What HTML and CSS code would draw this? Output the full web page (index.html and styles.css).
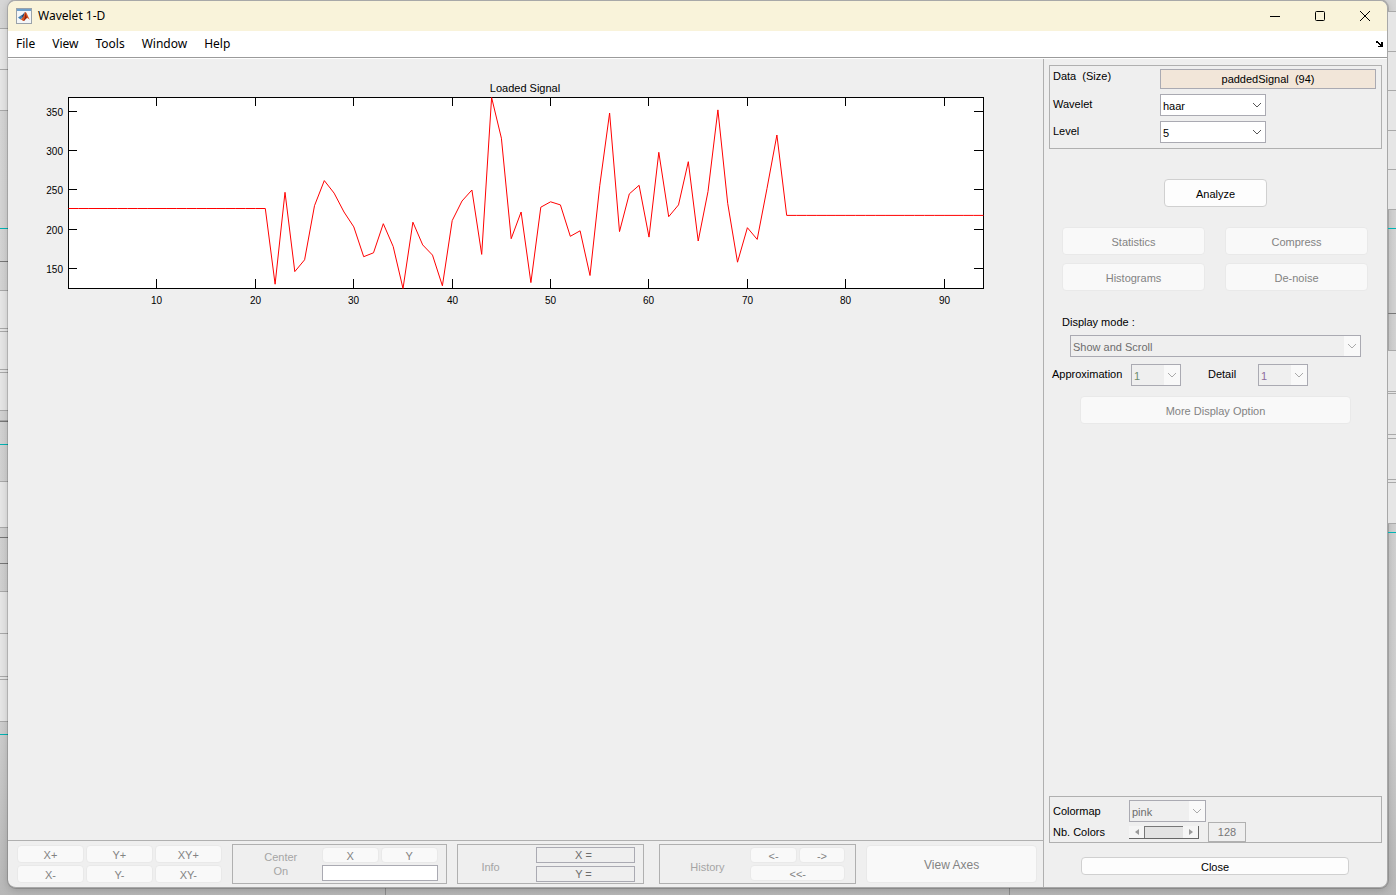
FILE: index.html
```html
<!DOCTYPE html>
<html lang="en">
<head>
    <meta charset="UTF-8">
    <meta name="viewport" content="width=device-width, initial-scale=1.0">
    <title>Wavelet 1-D</title>
    <link rel="stylesheet" href="styles.css">
</head>
<body>
    <svg class="symbols" aria-hidden="true">
        <symbol id="chevron" viewBox="0 0 16 20">
            <path d="M4 8 L8 12 L12 8" fill="none" stroke="currentColor"/>
        </symbol>
    </svg>

    <svg class="desk desk-left" aria-hidden="true">
        <path class="light" d="M4 28V110M4 290V410M4 481V527M4 591V721"/>
        <path class="rule" d="M0 28.5H8M0 69.5H8M0 110.5H8M0 290.5H8M0 328.5H8M0 331.5H8M0 369.5H8M0 372.5H8M0 410.5H8M0 420.5H8M0 481.5H8M0 527.5H8M0 591.5H8M0 633.5H8M0 676.5H8M0 679.5H8M0 721.5H8"/>
        <path class="dark" d="M0 261.5H8M0 421.5H8M0 537.5H8M0 563.5H8"/>
        <path class="teal" d="M0 228.5H8M0 444.5H8M0 734.5H8"/>
    </svg>

    <div class="window">
        <header class="titlebar">
            <svg class="logo" viewBox="0 0 16 16" aria-hidden="true">
                <rect x="0.5" y="0.5" width="15" height="15" fill="#f4f6f8" stroke="#9aa2aa"/>
                <path d="M1 1h14v2H1z" fill="#6ea0cc"/>
                <path d="M2 9.5 L5 7.5 L7 9.5 L4.5 11.5z" fill="#3f7fb5"/>
                <path d="M5 7.5 C7 7 7.5 5 9 4 L7.5 9.5 L6.5 9.5z" fill="#244d7c"/>
                <path d="M9 4 C8 7 7 10.5 4.5 11.5 C6 11.5 6.5 13 7.5 13 C9 13 9.5 10 11 10 C12 10 13 11 14 12 C12 9 11 4 9 4z" fill="#d9541e"/>
                <path d="M9 4 C9.5 7 9 10 7.5 13 C9 13 9.5 10 11 10z" fill="#8f2313"/>
            </svg>
            <h1>Wavelet 1-D</h1>
            <div class="window-buttons">
                <button aria-label="Minimize"><svg viewBox="0 0 12 12"><path d="M1 6.5H11"/></svg></button>
                <button aria-label="Maximize"><svg viewBox="0 0 12 12"><rect x="1.5" y="1.5" width="9" height="9" rx="1"/></svg></button>
                <button aria-label="Close window"><svg viewBox="0 0 12 12"><path d="M1 1L11 11M11 1L1 11"/></svg></button>
            </div>
        </header>

        <nav class="menubar">
            <button>File</button>
            <button>View</button>
            <button>Tools</button>
            <button>Window</button>
            <button>Help</button>
            <button class="dock" aria-label="Dock">
                <svg viewBox="0 0 8 6"><path d="M0 0h2v1h1v1h1v1h1V1h2v5H2V5h2V4H3V3H2V2H0z"/></svg>
            </button>
        </nav>

        <div class="content">
            <main class="workspace">
                <svg class="chart" id="chart" viewBox="0 0 1035 260" role="img" aria-label="Loaded Signal"></svg>

                <footer class="toolbar">
                    <div class="zoom">
                        <button disabled>X+</button>
                        <button disabled>Y+</button>
                        <button disabled>XY+</button>
                        <button disabled>X-</button>
                        <button disabled>Y-</button>
                        <button disabled>XY-</button>
                    </div>
                    <div class="group center">
                        <label for="center-on">Center<br>On</label>
                        <div class="pair">
                            <button disabled>X</button>
                            <button disabled>Y</button>
                            <input type="text" id="center-on">
                        </div>
                    </div>
                    <div class="group info">
                        <span>Info</span>
                        <div class="readouts">
                            <output>X =</output>
                            <output>Y =</output>
                        </div>
                    </div>
                    <div class="group history">
                        <span>History</span>
                        <div class="pair">
                            <button disabled>&lt;-</button>
                            <button disabled>-&gt;</button>
                            <button class="wide" disabled>&lt;&lt;-</button>
                        </div>
                    </div>
                    <button class="view-axes" disabled>View Axes</button>
                </footer>
            </main>

            <aside class="sidebar">
                <section class="panel data">
                    <label for="data-name">Data  (Size)</label>
                    <output class="data-name" id="data-name">paddedSignal  (94)</output>
                    <label for="wavelet">Wavelet</label>
                    <div class="dropdown">
                        <select id="wavelet"><option>haar</option></select>
                        <svg><use href="#chevron"/></svg>
                    </div>
                    <label for="level">Level</label>
                    <div class="dropdown">
                        <select id="level"><option>5</option></select>
                        <svg><use href="#chevron"/></svg>
                    </div>
                </section>

                <button class="analyze">Analyze</button>

                <div class="tools">
                    <button disabled>Statistics</button>
                    <button disabled>Compress</button>
                    <button disabled>Histograms</button>
                    <button disabled>De-noise</button>
                </div>

                <section class="display">
                    <label for="mode">Display mode :</label>
                    <div class="dropdown off mode">
                        <select id="mode" disabled><option>Show and Scroll</option></select>
                        <svg><use href="#chevron"/></svg>
                    </div>
                    <div class="levels">
                        <label for="approximation">Approximation</label>
                        <div class="dropdown off">
                            <select id="approximation" class="green" disabled><option>1</option></select>
                            <svg><use href="#chevron"/></svg>
                        </div>
                        <label class="detail" for="detail">Detail</label>
                        <div class="dropdown off">
                            <select id="detail" class="purple" disabled><option>1</option></select>
                            <svg><use href="#chevron"/></svg>
                        </div>
                    </div>
                    <button class="more" disabled>More Display Option</button>
                </section>

                <section class="panel colors">
                    <label for="colormap">Colormap</label>
                    <div class="dropdown off">
                        <select id="colormap" disabled><option>pink</option></select>
                        <svg><use href="#chevron"/></svg>
                    </div>
                    <label for="nb-colors">Nb. Colors</label>
                    <div class="color-count">
                        <div class="slider">
                            <button aria-label="Fewer colors" disabled><svg viewBox="0 0 4 6"><path d="M4 0V6L0 3z"/></svg></button>
                            <input type="range" id="nb-colors" min="2" max="256" value="128" disabled>
                            <button aria-label="More colors" disabled><svg viewBox="0 0 4 6"><path d="M0 0V6L4 3z"/></svg></button>
                        </div>
                        <output for="nb-colors">128</output>
                    </div>
                </section>

                <button class="close">Close</button>
            </aside>
        </div>
    </div>

    <svg class="desk desk-right" aria-hidden="true">
        <path class="light" d="M4 11V209M4 350V523"/>
        <path class="rule" d="M0 11.5H8M0 51.5H8M0 90.5H8M0 130.5H8M0 169.5H8M0 209.5H8M0 350.5H8M0 391.5H8M0 393.5H8M0 434.5H8M0 438.5H8M0 479.5H8M0 482.5H8M0 523.5H8"/>
        <path class="dark" d="M0 313.5H8"/>
        <path class="teal" d="M0 228.5H8M0 532.5H8"/>
    </svg>
    <script src="script.js"></script>
</body>
</html>
```
FILE: styles.css
```css
* {
    box-sizing: border-box;
}
body {
    margin: 0;
    height: 100vh;
    display: flex;
    background:
        linear-gradient(90deg, transparent 385px, #8e8e8e 385px, #8e8e8e 386px, transparent 386px, transparent 1009px, #8e8e8e 1009px, #8e8e8e 1010px, transparent 1010px),
        linear-gradient(#d6d6d6 0, #cfcfcf 80%, #b8b8b8 100%);
    font-family: "Liberation Sans", Arial, sans-serif;
    font-size: 11px;
    line-height: 14px;
    color: #000;
    overflow: hidden;
}
button, input, select {
    font: inherit;
    color: inherit;
    margin: 0;
    padding: 0;
}
.symbols {
    position: absolute;
    width: 0;
    height: 0;
}
.desk {
    width: 8px;
    height: 100%;
    flex: none;
}
.desk path {
    stroke: #a9a9a9;
}
.desk .light {
    stroke: #e6e6e6;
    stroke-width: 8px;
}
.desk .dark {
    stroke: #777;
}
.desk .teal {
    stroke: #00b4b4;
}
.window {
    flex: 1;
    min-width: 0;
    height: calc(100vh - 7px);
    display: flex;
    flex-direction: column;
    background: #efefef;
    border: 1px solid #a8a8a8;
    border-left: none;
    border-radius: 8px;
    overflow: hidden;
    box-shadow: 0 0 0 1px rgba(0, 0, 0, 0.15), 0 2px 8px rgba(0, 0, 0, 0.2);
}

/* title and menu */
.titlebar {
    height: 30px;
    flex: none;
    display: flex;
    align-items: center;
    gap: 6px;
    padding-left: 8px;
    background: #f9f3da;
    font-family: "Noto Sans", sans-serif;
    font-size: 12px;
}
.titlebar h1 {
    margin: 0;
    font-size: 12px;
    font-weight: normal;
}
.logo {
    width: 16px;
    height: 16px;
}
.window-buttons {
    margin-left: auto;
    display: flex;
}
.window-buttons button {
    width: 45px;
    height: 28px;
    display: flex;
    align-items: center;
    justify-content: center;
    background: none;
    border: none;
}
.window-buttons svg {
    width: 12px;
    height: 12px;
    fill: none;
    stroke: #000;
}
.menubar {
    height: 27px;
    flex: none;
    display: flex;
    align-items: center;
    gap: 17px;
    padding: 0 3px 0 8px;
    background: #fff;
    border-bottom: 1px solid #9b9b9b;
    font-family: "Noto Sans", sans-serif;
    font-size: 12px;
}
.menubar button {
    background: none;
    border: none;
}
.menubar .dock {
    margin-left: auto;
    line-height: 0;
}
.dock svg {
    width: 8px;
    height: 6px;
}

/* work area */
.content {
    flex: 1;
    min-height: 0;
    display: flex;
    border-top: 1px solid #fff;
}
.workspace {
    flex: 1;
    min-width: 0;
    display: flex;
    flex-direction: column;
    justify-content: space-between;
}
.chart {
    width: 100%;
    font-size: 10px;
}
.chart .axes {
    fill: none;
    stroke: #000;
    shape-rendering: crispEdges;
}
.chart .plot {
    fill: #fff;
}
.chart .signal {
    fill: none;
    stroke: #f00;
}
.chart text {
    text-anchor: middle;
}
.chart .y-label {
    text-anchor: end;
}
.chart .title {
    font-size: 11px;
}

/* shared controls */
.sidebar button, .toolbar button {
    background: #fdfdfd;
    border: 1px solid #d0d0d0;
    border-radius: 4px;
    padding-top: 2px;
}
.sidebar button:disabled, .toolbar button:disabled {
    background: #f9f9f9;
    border-color: #e9e9e9;
    color: #838383;
}
.panel, .group {
    border: 1px solid #b0b0b0;
}
label {
    white-space: pre;
}
.dropdown {
    display: grid;
    height: 22px;
    border: 1px solid #aaaab2;
    background: #fff;
    color: #555;
}
.dropdown select, .dropdown svg {
    grid-area: 1 / 1;
}
.dropdown select {
    appearance: none;
    width: 100%;
    border: none;
    background: none;
    padding: 2px 2px 0;
    color: #000;
}
.dropdown svg {
    justify-self: end;
    width: 16px;
    height: 20px;
    pointer-events: none;
}
.dropdown.off {
    background: #efefef;
    color: #aaa;
}
.dropdown.off select {
    color: #6d6d6d;
    opacity: 1;
}
.dropdown.off svg {
    background: #f9f9f9;
}
.dropdown.off .green {
    color: #6d8d6d;
}
.dropdown.off .purple {
    color: #8d6d9d;
}

/* toolbar */
.toolbar {
    height: 47px;
    flex: none;
    display: grid;
    grid-template-columns: 205fr 215fr 188fr 202fr 171fr;
    padding: 3px 6px 3px 9px;
    column-gap: 10px;
    border-top: 1px solid #b0b0b0;
    color: #838383;
}
.zoom {
    display: grid;
    grid-template-columns: repeat(3, 1fr);
    gap: 2px;
    padding: 1px 0;
}
.group {
    display: grid;
    align-items: center;
    text-align: center;
    color: #a5a5a5;
}
.center {
    grid-template-columns: 89px 1fr;
    padding-right: 8px;
}
.center label {
    padding-left: 7px;
}
.info {
    grid-template-columns: 78px 1fr;
    padding-right: 8px;
}
.info span {
    padding-right: 12px;
}
.info span, .history span {
    padding-top: 6px;
}
.history {
    grid-template-columns: 90px 1fr;
    margin-left: 5px;
    padding-right: 10px;
}
.history span {
    padding-left: 4px;
}
.pair {
    display: grid;
    grid-template-columns: 1fr 1fr;
    grid-template-rows: 16px 16px;
    gap: 2px;
    min-width: 0;
}
.pair input, .pair .wide {
    grid-column: 1 / 3;
}
.pair input {
    width: 100%;
    border: 1px solid #aaaab2;
    background: #fff;
}
.toolbar .pair button, .zoom button {
    line-height: 12px;
}
.readouts {
    display: grid;
    grid-template-rows: 16px 16px;
    gap: 3px;
    color: #6d6d6d;
}
.readouts output {
    border: 1px solid #aaaab2;
    padding-right: 4px;
}
.view-axes {
    margin: 1px 0;
    font-size: 12px;
}

/* sidebar */
.sidebar {
    width: 344px;
    flex: none;
    display: flex;
    flex-direction: column;
    padding: 6px 5px 12px;
    border-left: 1px solid #b0b0b0;
}
.data {
    display: grid;
    grid-template-columns: 107px 1fr;
    grid-template-rows: 20px 22px 22px;
    row-gap: 5px;
    padding: 3px 5px 5px 3px;
}
.data .dropdown {
    width: 106px;
}
.data label {
    padding-top: 3px;
}
.data label:first-child {
    padding-top: 0;
}
.data-name {
    border: 1px solid #aaaab2;
    background: #f2e6d9;
    text-align: center;
    line-height: 18px;
    white-space: pre;
}
.analyze {
    width: 103px;
    height: 28px;
    align-self: center;
    margin-top: 30px;
}
.tools {
    display: grid;
    grid-template-columns: 1fr 1fr;
    grid-auto-rows: 28px;
    gap: 8px 20px;
    margin: 20px 14px 0 13px;
}
.display {
    display: flex;
    flex-direction: column;
    align-items: flex-start;
    margin-top: 24px;
    padding: 0 3px;
}
.display > label {
    padding-left: 10px;
}
.mode {
    align-self: stretch;
    margin: 6px 18px 0;
}
.levels {
    display: grid;
    grid-template-columns: 79px 50px 77px 50px;
    margin-top: 7px;
}
.levels label {
    padding-top: 3px;
}
.levels .detail {
    padding-left: 27px;
}
.more {
    align-self: stretch;
    height: 28px;
    margin: 10px 28px 0;
}
.colors {
    display: grid;
    grid-template-columns: 76px 1fr;
    align-items: center;
    margin-top: auto;
    padding: 3px 3px 0;
}
.colors .dropdown {
    width: 77px;
}
.color-count {
    display: flex;
    align-items: center;
    gap: 9px;
}
.color-count output {
    width: 38px;
    height: 20px;
    border: 1px solid #b0b0b0;
    color: #777;
    line-height: 18px;
    text-align: center;
}
.slider {
    width: 70px;
    height: 13px;
    display: flex;
    border-right: 1px solid #666;
    border-bottom: 1px solid #666;
}
.sidebar .slider button:disabled {
    width: 15px;
    flex: none;
    display: flex;
    align-items: center;
    justify-content: center;
    padding: 0;
    border: none;
    border-radius: 0;
    background: #f5f5f5;
}
.slider svg {
    width: 4px;
    height: 6px;
    fill: #999;
}
.slider input {
    appearance: none;
    flex: 1;
    min-width: 0;
    background: #e3e3e3;
    border: 1px solid #777;
    border-width: 1px 0 0 1px;
}
.slider input::-webkit-slider-thumb {
    appearance: none;
    width: 1px;
}
.close {
    height: 18px;
    margin: 14px 33px 0 32px;
    line-height: 14px;
}
```
FILE: script.js
```javascript
const signal = [
    ...Array(21).fill(226.4),
    130, 247, 146, 161, 230, 262, 246, 222, 203,
    165, 170, 207, 178, 124.5, 209, 180, 167, 128, 211,
    236, 250, 168, 367.8, 316, 188, 222, 132, 228, 235,
    231, 191, 198, 141, 256, 348, 197, 245, 256, 190,
    298, 216, 231, 286, 185, 248, 352, 233, 158, 202,
    187, 252, 320,
    ...Array(21).fill(217.6)
];

const box = { left: 60, right: 975, top: 38, bottom: 229 };
const yMin = 124.5;
const yMax = 367.8;
const chart = document.getElementById('chart');

function xPos(n) {
    return box.left + (n - 1) * (box.right - box.left) / (signal.length - 1);
}

function yPos(v) {
    return box.bottom - (v - yMin) * (box.bottom - box.top) / (yMax - yMin);
}

let ticks = `M${box.left + 0.5} ${box.top + 0.5}H${box.right + 0.5}V${box.bottom + 0.5}H${box.left + 0.5}Z`;
let labels = '';

for (let n = 10; n <= 90; n += 10) {
    const x = Math.round(xPos(n) - 0.1) + 0.5;
    ticks += `M${x} ${box.top}v9M${x} ${box.bottom}v-9`;
    labels += `<text x="${x}" y="245">${n}</text>`;
}
for (let v = 150; v <= 350; v += 50) {
    const y = Math.round(yPos(v)) + 0.5;
    ticks += `M${box.left} ${y}h9M${box.right} ${y}h-9`;
    labels += `<text class="y-label" x="55" y="${y + 4}">${v}</text>`;
}

const points = signal.map((v, i) => `${(xPos(i + 1) + 0.5).toFixed(1)},${(yPos(v) + 0.5).toFixed(1)}`).join(' ');

chart.innerHTML = `
    <rect class="plot" x="${box.left}" y="${box.top}" width="${box.right - box.left}" height="${box.bottom - box.top}"/>
    <path class="axes" d="${ticks}"/>
    <polyline class="signal" points="${points}"/>
    <text class="title" x="517" y="33">Loaded Signal</text>
    ${labels}
`;
```
